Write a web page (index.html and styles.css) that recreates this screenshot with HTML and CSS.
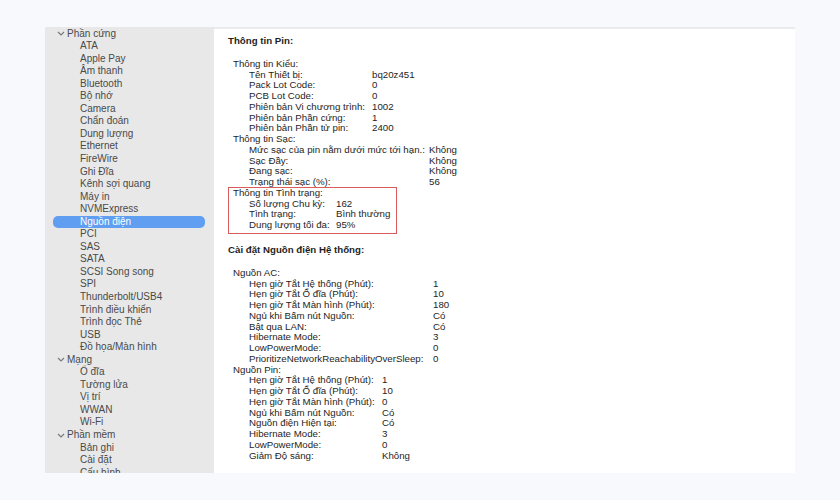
FILE: index.html
```html
<!DOCTYPE html>
<html lang="vi">
  <head>
    <meta charset="UTF-8" />
    <meta name="viewport" content="width=device-width, initial-scale=1.0" />
    <title>Thông tin Hệ thống</title>
    <link rel="stylesheet" href="styles.css">
  </head>
  <body>
    <div class="window">
      <aside class="sidebar">
        <div class="section"><svg class="chev" viewBox="0 0 8 5"><polyline points="1,1 4,4 7,1" /></svg>Phần cứng</div>
        <div class="item">ATA</div>
        <div class="item">Apple Pay</div>
        <div class="item">Âm thanh</div>
        <div class="item">Bluetooth</div>
        <div class="item">Bộ nhớ</div>
        <div class="item">Camera</div>
        <div class="item">Chẩn đoán</div>
        <div class="item">Dung lượng</div>
        <div class="item">Ethernet</div>
        <div class="item">FireWire</div>
        <div class="item">Ghi Đĩa</div>
        <div class="item">Kênh sợi quang</div>
        <div class="item">Máy in</div>
        <div class="item">NVMExpress</div>
        <div class="item selected">Nguồn điện</div>
        <div class="item">PCI</div>
        <div class="item">SAS</div>
        <div class="item">SATA</div>
        <div class="item">SCSI Song song</div>
        <div class="item">SPI</div>
        <div class="item">Thunderbolt/USB4</div>
        <div class="item">Trình điều khiển</div>
        <div class="item">Trình đọc Thẻ</div>
        <div class="item">USB</div>
        <div class="item">Đồ họa/Màn hình</div>
        <div class="section"><svg class="chev" viewBox="0 0 8 5"><polyline points="1,1 4,4 7,1" /></svg>Mạng</div>
        <div class="item">Ổ đĩa</div>
        <div class="item">Tường lửa</div>
        <div class="item">Vị trí</div>
        <div class="item">WWAN</div>
        <div class="item">Wi-Fi</div>
        <div class="section"><svg class="chev" viewBox="0 0 8 5"><polyline points="1,1 4,4 7,1" /></svg>Phần mềm</div>
        <div class="item">Bản ghi</div>
        <div class="item">Cài đặt</div>
        <div class="item">Cấu hình</div>
      </aside>

      <main class="content">
        <h2>Thông tin Pin:</h2>

        <div class="group">
          <div class="group-title">Thông tin Kiểu:</div>
          <div class="rows kieu">
            <span>Tên Thiết bị:</span><span>bq20z451</span>
            <span>Pack Lot Code:</span><span>0</span>
            <span>PCB Lot Code:</span><span>0</span>
            <span>Phiên bản Vi chương trình:</span><span>1002</span>
            <span>Phiên bản Phần cứng:</span><span>1</span>
            <span>Phiên bản Phần tử pin:</span><span>2400</span>
          </div>
          <div class="group-title">Thông tin Sạc:</div>
          <div class="rows sac">
            <span>Mức sạc của pin nằm dưới mức tới hạn.:</span><span>Không</span>
            <span>Sạc Đầy:</span><span>Không</span>
            <span>Đang sạc:</span><span>Không</span>
            <span>Trạng thái sạc (%):</span><span>56</span>
          </div>
          <div class="highlight">
            <div class="group-title">Thông tin Tình trạng:</div>
            <div class="rows tinh">
              <span>Số lượng Chu kỳ:</span><span>162</span>
              <span>Tình trạng:</span><span>Bình thường</span>
              <span>Dung lượng tối đa:</span><span>95%</span>
            </div>
          </div>
        </div>

        <h2>Cài đặt Nguồn điện Hệ thống:</h2>

        <div class="group">
          <div class="group-title">Nguồn AC:</div>
          <div class="rows ac">
            <span>Hẹn giờ Tắt Hệ thống (Phút):</span><span>1</span>
            <span>Hẹn giờ Tắt Ổ đĩa (Phút):</span><span>10</span>
            <span>Hẹn giờ Tắt Màn hình (Phút):</span><span>180</span>
            <span>Ngủ khi Bấm nút Nguồn:</span><span>Có</span>
            <span>Bật qua LAN:</span><span>Có</span>
            <span>Hibernate Mode:</span><span>3</span>
            <span>LowPowerMode:</span><span>0</span>
            <span>PrioritizeNetworkReachabilityOverSleep:</span><span>0</span>
          </div>
          <div class="group-title">Nguồn Pin:</div>
          <div class="rows pin">
            <span>Hẹn giờ Tắt Hệ thống (Phút):</span><span>1</span>
            <span>Hẹn giờ Tắt Ổ đĩa (Phút):</span><span>10</span>
            <span>Hẹn giờ Tắt Màn hình (Phút):</span><span>0</span>
            <span>Ngủ khi Bấm nút Nguồn:</span><span>Có</span>
            <span>Nguồn điện Hiện tại:</span><span>Có</span>
            <span>Hibernate Mode:</span><span>3</span>
            <span>LowPowerMode:</span><span>0</span>
            <span>Giảm Độ sáng:</span><span>Không</span>
          </div>
        </div>
      </main>
    </div>
  </body>
</html>
```

FILE: styles.css
```css
* {
  box-sizing: border-box;
}

body {
  margin: 0;
  background: #f8f9fc;
  font-family: "Liberation Sans", Arial, sans-serif;
}

.window {
  display: grid;
  grid-template-columns: 169px 1fr;
  width: 750px;
  height: 446px;
  margin: 27px 0 0 45px;
  overflow: hidden;
}

/* Sidebar */
.sidebar {
  background: #e8e8e8;
  font-size: 10px;
  line-height: 12.54px;
  color: #4a4a4a;
  overflow: hidden;
  padding-top: 0.5px;
}

.section {
  display: flex;
  align-items: center;
  padding-left: 12px;
  white-space: nowrap;
}

.chev {
  width: 8px;
  height: 5px;
  margin-right: 2px;
  fill: none;
  stroke: #7a7a7a;
  stroke-width: 1.2;
}

.item {
  padding-left: 35px;
  white-space: nowrap;
}

.item.selected {
  background: #5f9ef0;
  color: #fff;
  border-radius: 5px;
  margin: 0 9px 0 8px;
  padding-left: 27px;
}

/* Content */
.content {
  background: #fff;
  border-top: 2px solid #e9ebee;
  padding: 7px 0 0 14px;
  font-size: 9.7px;
  line-height: 10.8px;
  color: #1e1e1e;
  white-space: nowrap;
}

h2 {
  font-size: 9.7px;
  font-weight: bold;
  margin: 0 0 12px;
  line-height: 10.8px;
}

.group {
  margin-bottom: 12px;
}

.group-title {
  padding-left: 5px;
}

.rows {
  display: grid;
  grid-auto-rows: 10.75px;
  padding-left: 21px;
}

.kieu { grid-template-columns: 123px auto; }
.sac { grid-template-columns: 180px auto; }
.tinh { grid-template-columns: 87px auto; }
.ac { grid-template-columns: 184px auto; }
.pin { grid-template-columns: 133px auto; }

.highlight {
  width: 167px;
  margin-left: 1px;
  outline: 1.5px solid #d95b5b;
  outline-offset: 0;
  padding-bottom: 2px;
}

.highlight .group-title {
  padding-left: 4px;
}

.highlight .rows {
  padding-left: 20px;
}
```
